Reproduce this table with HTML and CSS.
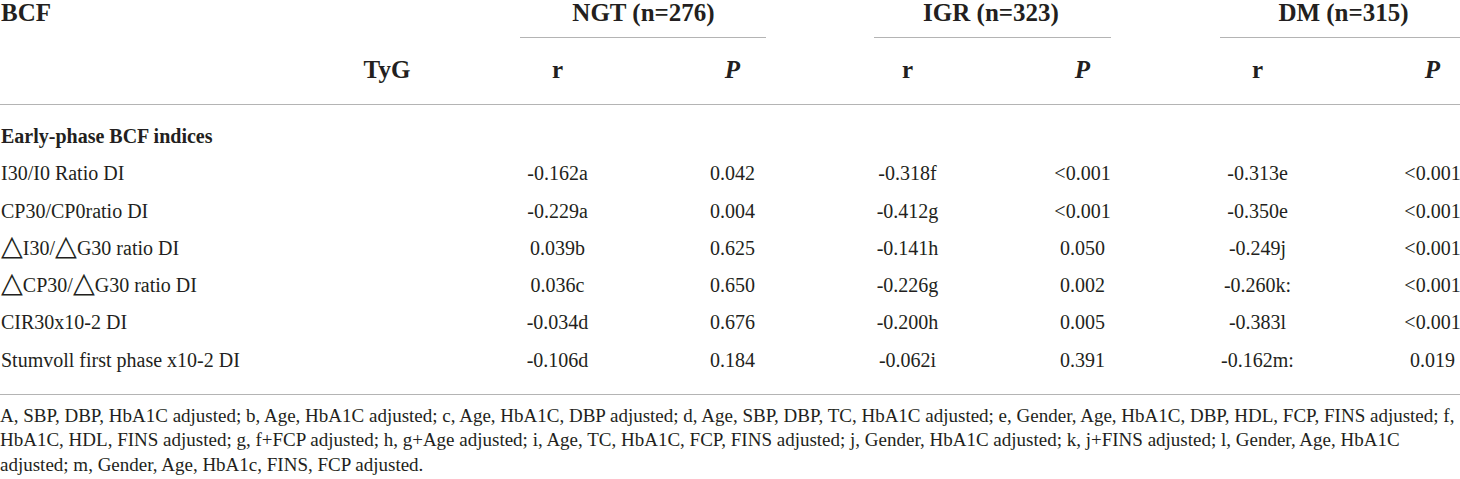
FILE: index.html
```html
<!DOCTYPE html>
<html lang="en">
<head>
<meta charset="utf-8">
<title>BCF table</title>
<link rel="stylesheet" href="styles.css">
</head>
<body>
<div class="page">
  <div class="clip">
    <div class="table">
      <div class="row head1">
        <div class="cell label span2">BCF</div>
        <div class="cell span2 grp"><div class="grp-line">NGT (n=276)</div></div>
        <div class="cell span2 grp"><div class="grp-line mid">IGR (n=323)</div></div>
        <div class="cell span2 grp"><div class="grp-line">DM (n=315)</div></div>
      </div>
      <div class="row head2">
        <div class="cell"></div>
        <div class="cell c">TyG</div>
        <div class="cell c">r</div>
        <div class="cell c"><i>P</i></div>
        <div class="cell c">r</div>
        <div class="cell c"><i>P</i></div>
        <div class="cell c">r</div>
        <div class="cell c"><i>P</i></div>
      </div>
      <div class="body">
        <div class="row data section">
          <div class="cell label span8">Early-phase BCF indices</div>
        </div>
        <div class="row data">
          <div class="cell label">I30/I0 Ratio DI</div><div class="cell"></div>
          <div class="cell c">-0.162a</div><div class="cell c">0.042</div>
          <div class="cell c">-0.318f</div><div class="cell c">&lt;0.001</div>
          <div class="cell c">-0.313e</div><div class="cell c">&lt;0.001</div>
        </div>
        <div class="row data">
          <div class="cell label">CP30/CP0ratio DI</div><div class="cell"></div>
          <div class="cell c">-0.229a</div><div class="cell c">0.004</div>
          <div class="cell c">-0.412g</div><div class="cell c">&lt;0.001</div>
          <div class="cell c">-0.350e</div><div class="cell c">&lt;0.001</div>
        </div>
        <div class="row data">
          <div class="cell label"><span class="tri">△</span>I30/<span class="tri">△</span>G30 ratio DI</div><div class="cell"></div>
          <div class="cell c">0.039b</div><div class="cell c">0.625</div>
          <div class="cell c">-0.141h</div><div class="cell c">0.050</div>
          <div class="cell c">-0.249j</div><div class="cell c">&lt;0.001</div>
        </div>
        <div class="row data">
          <div class="cell label"><span class="tri">△</span>CP30/<span class="tri">△</span>G30 ratio DI</div><div class="cell"></div>
          <div class="cell c">0.036c</div><div class="cell c">0.650</div>
          <div class="cell c">-0.226g</div><div class="cell c">0.002</div>
          <div class="cell c">-0.260k:</div><div class="cell c">&lt;0.001</div>
        </div>
        <div class="row data">
          <div class="cell label">CIR30x10-2 DI</div><div class="cell"></div>
          <div class="cell c">-0.034d</div><div class="cell c">0.676</div>
          <div class="cell c">-0.200h</div><div class="cell c">0.005</div>
          <div class="cell c">-0.383l</div><div class="cell c">&lt;0.001</div>
        </div>
        <div class="row data">
          <div class="cell label">Stumvoll first phase x10-2 DI</div><div class="cell"></div>
          <div class="cell c">-0.106d</div><div class="cell c">0.184</div>
          <div class="cell c">-0.062i</div><div class="cell c">0.391</div>
          <div class="cell c">-0.162m:</div><div class="cell c">0.019</div>
        </div>
      </div>
    </div>
  </div>
  <p class="notes">A, SBP, DBP, HbA1C adjusted; b, Age, HbA1C adjusted; c, Age, HbA1C, DBP adjusted; d, Age, SBP, DBP, TC, HbA1C adjusted; e, Gender, Age, HbA1C, DBP, HDL, FCP, FINS adjusted; f, HbA1C, HDL, FINS adjusted; g, f+FCP adjusted; h, g+Age adjusted; i, Age, TC, HbA1C, FCP, FINS adjusted; j, Gender, HbA1C adjusted; k, j+FINS adjusted; l, Gender, Age, HbA1C adjusted; m, Gender, Age, HbA1c, FINS, FCP adjusted.</p>
</div>
</body>
</html>
```

FILE: styles.css
```css
html, body {
  margin: 0;
  padding: 0;
  background: #ffffff;
}

body {
  font-family: "Liberation Serif", "Times New Roman", serif;
  color: #231f20;
}

.page {
  width: 1460px;
}

.clip {
  width: 1460px;
  overflow: hidden;
}

.table {
  width: 1520px;
  --cols: 300px 170px repeat(6, 175px);
}

.row {
  display: grid;
  grid-template-columns: var(--cols);
}

.cell {
  white-space: nowrap;
}

.c {
  text-align: center;
}

.span2 {
  grid-column: span 2;
}

.span8 {
  grid-column: span 8;
}

.head1,
.head2 {
  font-size: 25px;
  font-weight: bold;
}

.head1 {
  height: 38px;
  line-height: 25px;
}

.grp {
  text-align: center;
}

.grp-line {
  box-sizing: border-box;
  height: 38px;
  margin: 0 54px 0 50px;
  padding-left: 1px;
  border-bottom: 1px solid #b4b4b4;
}

.grp-line.mid {
  margin: 0 59px 0 54px;
  padding-left: 0;
  padding-right: 3px;
}

.head2 {
  box-sizing: border-box;
  height: 67px;
  padding-bottom: 3px;
  align-items: center;
  border-bottom: 1px solid #b4b4b4;
}

.head2 .c:nth-child(2) {
  padding-left: 4px;
}

.body {
  padding: 13px 0 15px;
  border-bottom: 1px solid #b4b4b4;
}

.data {
  height: 37.25px;
  align-items: center;
  font-size: 20px;
}

.section {
  font-weight: bold;
}

.label {
  padding-left: 1px;
}

.tri {
  font-family: "DejaVu Sans", sans-serif;
  font-size: 1.42em;
  line-height: 0;
}

.notes {
  margin: 0;
  padding-top: 9px;
  font-size: 19px;
  line-height: 24.5px;
}
```
